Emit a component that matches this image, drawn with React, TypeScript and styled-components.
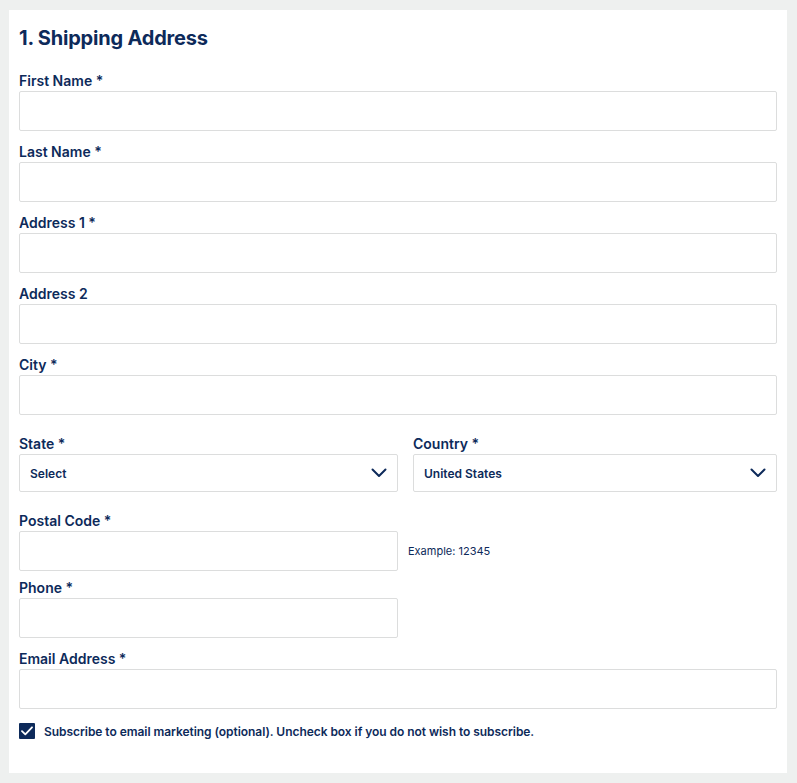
import React from "react";
import styled, { createGlobalStyle } from "styled-components";

const Global = createGlobalStyle`
  html, body { margin: 0; padding: 0; background: #eef0ef; }
  body { font-family: Inter, "Liberation Sans", Arial, sans-serif; color: #0d2a5a; }
  * { box-sizing: border-box; }
`;

const Page = styled.div`
  padding: 10px 10px 10px 9px;
`;

const Card = styled.section`
  width: 778px;
  height: 763px;
  background: #ffffff;
  padding: 16px 10px 0 10px;
  display: flex;
  flex-direction: column;
`;

const Title = styled.h1`
  margin: 0 0 21px 0;
  font-size: 20px;
  line-height: 24px;
  font-weight: 700;
  color: #0d2a5a;
  letter-spacing: -0.2px;
`;

const Field = styled.div<{ $mt?: number; $w?: number }>`
  display: flex;
  flex-direction: column;
  margin-top: ${(p) => p.$mt ?? 0}px;
  width: ${(p) => (p.$w ? `${p.$w}px` : "100%")};
`;

const Label = styled.label`
  font-size: 14px;
  line-height: 20px;
  font-weight: 600;
  color: #0d2a5a;
`;

const Input = styled.input`
  display: block;
  width: 100%;
  height: 40px;
  border: 1px solid #dcdddd;
  border-radius: 2px;
  background: #fff;
  padding: 0 10px;
  font: inherit;
  outline: none;
`;

const Row = styled.div<{ $mt?: number }>`
  display: flex;
  gap: 15px;
  margin-top: ${(p) => p.$mt ?? 0}px;
  align-items: flex-end;
`;

const SelectBox = styled.div`
  height: 38px;
  border: 1px solid #dcdddd;
  border-radius: 2px;
  display: flex;
  align-items: center;
  justify-content: space-between;
  padding: 0 10px 0 10px;
  font-size: 12px;
  font-weight: 600;
  color: #0d2a5a;
`;

const Hint = styled.span`
  font-size: 11px;
  line-height: 40px;
  color: #0d2a5a;
  margin-left: 10px;
  height: 40px;
`;

const InlineRow = styled.div`
  display: flex;
  align-items: flex-end;
`;

const CheckRow = styled.label`
  display: flex;
  align-items: center;
  gap: 9px;
  margin-top: 14px;
  font-size: 12px;
  font-weight: 600;
  letter-spacing: -0.05px;
  color: #0d2a5a;
`;

const Box = styled.span`
  width: 16px;
  height: 16px;
  background: #0d2a5a;
  border-radius: 1px;
  display: inline-flex;
  align-items: center;
  justify-content: center;
`;

const Chevron = () => (
  <svg width="16" height="10" viewBox="0 0 16 10" fill="none">
    <path d="M1.5 1.5 L8 8 L14.5 1.5" stroke="#0d2a5a" strokeWidth="2" strokeLinecap="round" strokeLinejoin="round" />
  </svg>
);

const Check = () => (
  <svg width="12" height="10" viewBox="0 0 12 10" fill="none">
    <path d="M1 5.2 L4.3 8.4 L11 1.3" stroke="#fff" strokeWidth="1.8" strokeLinecap="round" strokeLinejoin="round" />
  </svg>
);

export default function App() {
  return (
    <>
      <Global />
      <Page>
        <Card>
          <Title>1. Shipping Address</Title>
          <Field>
            <Label>First Name *</Label>
            <Input />
          </Field>
          <Field $mt={11}>
            <Label>Last Name *</Label>
            <Input />
          </Field>
          <Field $mt={11}>
            <Label>Address 1 *</Label>
            <Input />
          </Field>
          <Field $mt={11}>
            <Label>Address 2</Label>
            <Input />
          </Field>
          <Field $mt={11}>
            <Label>City *</Label>
            <Input />
          </Field>
          <Row $mt={19}>
            <Field $w={379}>
              <Label>State *</Label>
              <SelectBox>
                <span>Select</span>
                <Chevron />
              </SelectBox>
            </Field>
            <Field $w={364}>
              <Label>Country *</Label>
              <SelectBox>
                <span>United States</span>
                <Chevron />
              </SelectBox>
            </Field>
          </Row>
          <InlineRow>
            <Field $mt={19} $w={379}>
              <Label>Postal Code *</Label>
              <Input />
            </Field>
            <Hint>Example: 12345</Hint>
          </InlineRow>
          <Field $mt={7} $w={379}>
            <Label>Phone *</Label>
            <Input />
          </Field>
          <Field $mt={11}>
            <Label>Email Address *</Label>
            <Input />
          </Field>
          <CheckRow>
            <Box>
              <Check />
            </Box>
            <span>Subscribe to email marketing (optional). Uncheck box if you do not wish to subscribe.</span>
          </CheckRow>
        </Card>
      </Page>
    </>
  );
}
